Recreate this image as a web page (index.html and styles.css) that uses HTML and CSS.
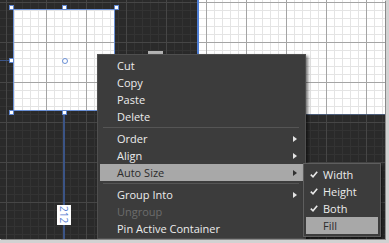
FILE: index.html
```html
<!DOCTYPE html>
<html>
<head>
<meta charset="utf-8">
<link rel="stylesheet" href="styles.css">
</head>
<body>
<div class="screen">
  <div class="canvas">
    <div class="page"></div>
    <div class="guide-h"></div>
    <div class="guide-v"></div>
    <div class="shape"><span class="center"></span></div>
    <span class="handle h-tl"></span>
    <span class="handle h-tm"></span>
    <span class="handle h-tr"></span>
    <span class="handle h-ml"></span>
    <span class="handle h-mr"></span>
    <span class="handle h-bl"></span>
    <span class="handle h-bm"></span>
    <span class="handle h-br"></span>
    <div class="tip"></div>
    <div class="dim-label">212</div>

    <div class="menu">
      <div class="item">Cut</div>
      <div class="item">Copy</div>
      <div class="item">Paste</div>
      <div class="item">Delete</div>
      <div class="sep"></div>
      <div class="item sub">Order<span class="arrow"></span></div>
      <div class="item sub">Align<span class="arrow"></span></div>
      <div class="item sub active">Auto Size<span class="arrow"></span></div>
      <div class="sep"></div>
      <div class="item sub">Group Into<span class="arrow"></span></div>
      <div class="item disabled">Ungroup</div>
      <div class="item">Pin Active Container</div>
    </div>

    <div class="submenu">
      <div class="sitem"><svg class="check" width="8" height="7" viewBox="0 0 8 7"><path d="M0.8 3.6 L3 5.8 L7.2 0.8" fill="none" stroke="#e8e8e8" stroke-width="1.6"/></svg>Width</div>
      <div class="sitem"><svg class="check" width="8" height="7" viewBox="0 0 8 7"><path d="M0.8 3.6 L3 5.8 L7.2 0.8" fill="none" stroke="#e8e8e8" stroke-width="1.6"/></svg>Height</div>
      <div class="sitem"><svg class="check" width="8" height="7" viewBox="0 0 8 7"><path d="M0.8 3.6 L3 5.8 L7.2 0.8" fill="none" stroke="#e8e8e8" stroke-width="1.6"/></svg>Both</div>
      <div class="sitem active"><span class="nocheck"></span>Fill</div>
    </div>
  </div>
</div>
</body>
</html>
```

FILE: styles.css
```css
html, body {
  margin: 0;
  padding: 0;
  background: #d2d2d2;
}

.screen {
  width: 389px;
  height: 243px;
  background: #d2d2d2;
  overflow: hidden;
}

.canvas {
  position: relative;
  width: 385px;
  height: 239px;
  overflow: hidden;
  box-shadow: 1px 1px 0 #8a8a8a;
  background-color: #2a2a2a;
  background-image:
    linear-gradient(to right, #464646 1px, transparent 1px),
    linear-gradient(to bottom, #464646 1px, transparent 1px),
    linear-gradient(to right, #333333 1px, transparent 1px),
    linear-gradient(to bottom, #333333 1px, transparent 1px);
  background-size: 40px 40px, 40px 40px, 8px 8px, 8px 8px;
  background-position: 6px 2px;
  font-family: "Open Sans", "Segoe UI", sans-serif;
}

.page, .shape {
  background-color: #ffffff;
  background-image:
    linear-gradient(to right, #a4a4a4 1px, transparent 1px),
    linear-gradient(to bottom, #a4a4a4 1px, transparent 1px),
    linear-gradient(to right, #e4e4e4 1px, transparent 1px),
    linear-gradient(to bottom, #e4e4e4 1px, transparent 1px);
  background-size: 40px 40px, 40px 40px, 8px 8px, 8px 8px;
  background-position: 6px 2px;
  background-attachment: fixed;
}

.page {
  position: absolute;
  left: 197px;
  top: -1px;
  width: 186px;
  height: 115px;
  border-left: 2px solid #4f7fd6;
  border-bottom: 1px solid #4b5c78;
}

.shape {
  position: absolute;
  left: 13px;
  top: 9px;
  width: 100px;
  height: 100px;
  border: 1px solid #6a90d6;
}

.center {
  position: absolute;
  left: 48px;
  top: 48px;
  width: 4px;
  height: 4px;
  border: 1px solid #6a90d6;
  border-radius: 50%;
}

.handle {
  position: absolute;
  width: 3px;
  height: 3px;
  background: #ffffff;
  border: 1px solid #5f86d0;
}
.h-tl { left: 9px;   top: 5px; }
.h-tm { left: 62px;  top: 5px; }
.h-tr { left: 114px; top: 5px; }
.h-ml { left: 9px;   top: 58px; }
.h-mr { left: 114px; top: 58px; }
.h-bl { left: 9px;   top: 110px; }
.h-bm { left: 62px;  top: 110px; }
.h-br { left: 114px; top: 110px; }

.guide-h {
  position: absolute;
  left: 0;
  top: 60px;
  width: 10px;
  height: 1px;
  background: #3b5486;
}

.guide-v {
  position: absolute;
  left: 63px;
  top: 112px;
  width: 2px;
  height: 130px;
  background: #3b5486;
}

.tip {
  position: absolute;
  left: 148px;
  top: 51px;
  width: 15px;
  height: 4px;
  background: #b4b4b4;
}

.dim-label {
  position: absolute;
  left: 57px;
  top: 205px;
  width: 14px;
  height: 20px;
  background: #ffffff;
  color: #5b80d2;
  writing-mode: vertical-rl;
  font-size: 10px;
  line-height: 14px;
  text-align: center;
  font-family: "Open Sans", sans-serif;
}

.menu {
  position: absolute;
  left: 97px;
  top: 54px;
  width: 209px;
  box-sizing: border-box;
  padding: 2px 2px 1px 2px;
  background: #3c3c3c;
  border: 1px solid #4f4f4f;
  box-shadow: 2px 2px 3px rgba(0, 0, 0, 0.55);
  display: flex;
  flex-direction: column;
}

.item {
  height: 17px;
  line-height: 17px;
  padding-left: 17px;
  font-size: 11px;
  color: #ececec;
  display: flex;
  align-items: center;
  justify-content: space-between;
  white-space: nowrap;
}

.item.active {
  background: #a8a8a8;
  color: #2c2c2c;
}

.item.disabled {
  color: #6c6c6c;
}

.arrow {
  width: 0;
  height: 0;
  margin-right: 6px;
  border-left: 4px solid #e4e4e4;
  border-top: 3.5px solid transparent;
  border-bottom: 3.5px solid transparent;
}

.item.active .arrow {
  border-left-color: #303030;
}

.sep {
  height: 1px;
  margin: 2px 4px 2px 3px;
  background: #555555;
}

.submenu {
  position: absolute;
  left: 303px;
  top: 163px;
  width: 78px;
  box-sizing: border-box;
  padding: 2px;
  background: #3c3c3c;
  border: 1px solid #5e5e5e;
  box-shadow: 2px 2px 3px rgba(0, 0, 0, 0.55);
  display: flex;
  flex-direction: column;
}

.sitem {
  height: 17px;
  line-height: 17px;
  padding-left: 4px;
  font-size: 11px;
  color: #ececec;
  display: flex;
  align-items: center;
  gap: 5px;
  white-space: nowrap;
}

.sitem.active {
  background: #a8a8a8;
  color: #2c2c2c;
}

.check {
  flex: none;
  width: 8px;
  height: 7px;
  margin-right: 0;
}

.nocheck {
  flex: none;
  width: 8px;
}
```
